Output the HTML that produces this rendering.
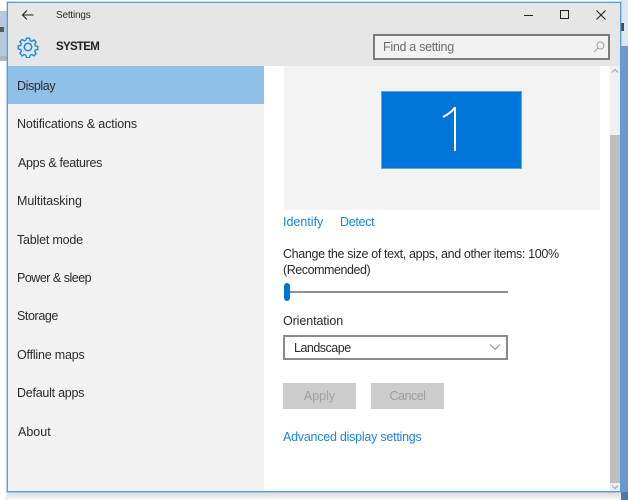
<!DOCTYPE html>
<html>
<head>
<meta charset="utf-8">
<style>
html,body{margin:0;padding:0;background:#fff}
body{width:628px;height:500px;position:relative;overflow:hidden;font-family:"Liberation Sans",sans-serif;color:#222}
.a{position:absolute}
.t{position:absolute;font-size:12.5px;line-height:16px;white-space:nowrap;color:#2a2a2a;filter:blur(.25px)}
.l{color:#1a85dd}
</style>
</head>
<body>
<!-- backdrop -->
<div class="a" style="left:0;top:11px;width:7px;height:50px;background:#b9c9dc"></div>
<div class="a" style="left:0;top:56px;width:7px;height:5px;background:#a9b8c8"></div>
<div class="a" style="left:0;top:27px;width:4px;height:5px;background:#555a60"></div>
<div class="a" style="left:0;top:61px;width:8px;height:439px;background:linear-gradient(90deg,#fff 0,#fff 4px,#e8e8e8 8px)"></div>
<div class="a" style="left:621px;top:0;width:7px;height:500px;background:#6f98c8"></div>
<div class="a" style="left:621px;top:0;width:7px;height:46px;background:#dfe6ee"></div>
<div class="a" style="left:621px;top:23px;width:3px;height:8px;background:#3d4a5a"></div>
<div class="a" style="left:8px;top:492px;width:613px;height:8px;background:linear-gradient(#d8d8d8,#f8f8f8)"></div>
<div class="a" style="left:621px;top:492px;width:7px;height:8px;background:#4f76ab"></div>
<!-- window -->
<div class="a" style="left:7px;top:2px;width:614px;height:490px;box-sizing:border-box;border:1px solid #4f9fe0;background:#fff;box-shadow:0 0 0 1px rgba(91,164,221,.35)"></div>
<!-- title bar -->
<div class="a" style="left:8px;top:3px;width:612px;height:63px;background:#e6e6e6"></div>
<!-- sidebar -->
<div class="a" style="left:8px;top:66px;width:256px;height:425px;background:#f2f2f2"></div>
<div class="a" style="left:8px;top:66px;width:256px;height:38px;background:#90bfe8"></div>
<!-- back arrow -->
<svg class="a" style="left:21px;top:8px" width="14" height="14" viewBox="0 0 14 14" fill="none" stroke="#222" stroke-width="1.1"><path d="M1.5 7H12.5M6 2.5L1.5 7L6 11.5"/></svg>
<div class="t" style="left:56px;top:9px;font-size:10px;line-height:14px;letter-spacing:-.2px">Settings</div>
<!-- gear -->
<svg class="a" style="left:17px;top:36px" width="22" height="22" viewBox="0 0 22 22" fill="none" stroke="#1a85dd" stroke-width="1.5" stroke-linejoin="round"><path d="M9.200 1.200h3.600l.5 2.700 1.900.8 2.300-1.600 2.500 2.500-1.600 2.300.8 1.900 2.700.5v3.400l-2.700.5-.8 1.900 1.600 2.300-2.500 2.500-2.300-1.600-1.900.8-.5 2.700H9.200l-.5-2.700-1.900-.8-2.300 1.600L2 17.900l1.600-2.300-.8-1.900L.1 13.200V9.800l2.700-.5.8-1.900L2 5.100l2.500-2.500 2.300 1.600 1.900-.8z" transform="translate(1.100 1.100) scale(.9)"/><circle cx="11" cy="11" r="3.700"/></svg>
<div class="t" style="left:56px;top:40px;font-size:11.5px;font-weight:bold;color:#222;line-height:15px;letter-spacing:-.7px">SYSTEM</div>
<!-- window buttons -->
<div class="a" style="left:524px;top:15px;width:9px;height:1px;background:#222"></div>
<div class="a" style="left:560px;top:10px;width:9px;height:9px;box-sizing:border-box;border:1.500px solid #222"></div>
<svg class="a" style="left:596px;top:10px" width="10" height="10" viewBox="0 0 10 10" stroke="#222" stroke-width="1.1"><path d="M.5.500L9.500 9.500M9.500.500L.5 9.500"/></svg>
<!-- search -->
<div class="a" style="left:373px;top:34px;width:237px;height:26px;box-sizing:border-box;border:2px solid #7a7a7a;background:#f2f2f2"></div>
<div class="t" style="left:383px;top:39px;color:#6d6d6d;letter-spacing:-.3px">Find a setting</div>
<svg class="a" style="left:593px;top:41px" width="12" height="12" viewBox="0 0 12 12" fill="none" stroke="#a0a0a0" stroke-width="1"><circle cx="7.500" cy="4.500" r="3.500"/><path d="M5 7L1 11"/></svg>
<!-- nav -->
<div class="t" style="left:17px;top:78px;letter-spacing:-.4px">Display</div>
<div class="t" style="left:17px;top:116px;letter-spacing:-.13px">Notifications &amp; actions</div>
<div class="t" style="left:18px;top:155px;letter-spacing:-.33px">Apps &amp; features</div>
<div class="t" style="left:17px;top:193px;letter-spacing:-.1px">Multitasking</div>
<div class="t" style="left:17px;top:232px;letter-spacing:-.2px">Tablet mode</div>
<div class="t" style="left:17px;top:270px;letter-spacing:-.5px">Power &amp; sleep</div>
<div class="t" style="left:17px;top:308px;letter-spacing:-.4px">Storage</div>
<div class="t" style="left:17px;top:347px;letter-spacing:-.2px">Offline maps</div>
<div class="t" style="left:17px;top:385px;letter-spacing:-.25px">Default apps</div>
<div class="t" style="left:18px;top:424px">About</div>
<!-- display preview -->
<div class="a" style="left:284px;top:66px;width:316px;height:144px;background:#f3f3f3"></div>
<div class="a" style="left:381px;top:91px;width:141px;height:78px;box-sizing:border-box;border:1px solid #5ea6e4;background:#0075d9"></div>
<svg class="a" style="left:440px;top:104px" width="24" height="50" viewBox="0 0 24 50" fill="none" stroke="#fff" stroke-width="2"><path d="M15 3V47M15 3.500C12 7.500 8 10.500 3 13"/></svg>
<div class="t l" style="left:283px;top:214px">Identify</div>
<div class="t l" style="left:340px;top:214px;letter-spacing:-.3px">Detect</div>
<div class="t" style="left:283px;top:246px;letter-spacing:-.35px">Change the size of text, apps, and other items: 100%</div>
<div class="t" style="left:283px;top:262px;letter-spacing:-.45px">(Recommended)</div>
<!-- slider -->
<div class="a" style="left:284px;top:291px;width:224px;height:2px;background:#8f8f8f"></div>
<div class="a" style="left:284px;top:283px;width:6px;height:18px;border-radius:3px;background:#0075d9"></div>
<div class="t" style="left:283px;top:313px;letter-spacing:-.1px">Orientation</div>
<!-- dropdown -->
<div class="a" style="left:283px;top:335px;width:225px;height:25px;box-sizing:border-box;border:2px solid #8a8a8a;background:#fff"></div>
<div class="t" style="left:294px;top:340px;letter-spacing:-.5px">Landscape</div>
<svg class="a" style="left:489px;top:343px" width="12" height="8" viewBox="0 0 12 8" fill="none" stroke="#8a8a8a" stroke-width="1"><path d="M1 1.500L6 6.500L11 1.500"/></svg>
<!-- buttons -->
<div class="a" style="left:283px;top:383px;width:73px;height:26px;background:#cccccc"></div>
<div class="t" style="left:283px;top:388px;width:73px;text-align:center;color:#9f9f9f">Apply</div>
<div class="a" style="left:371px;top:383px;width:73px;height:26px;background:#cccccc"></div>
<div class="t" style="left:371px;top:388px;width:73px;text-align:center;color:#9f9f9f;letter-spacing:-.5px">Cancel</div>
<div class="t l" style="left:283px;top:429px;letter-spacing:-.24px">Advanced display settings</div>
<!-- scrollbar -->
<div class="a" style="left:610px;top:66px;width:10px;height:425px;background:#f0f0f0"></div>
<div class="a" style="left:610px;top:135px;width:10px;height:348px;background:#c0bfbd"></div>
<svg class="a" style="left:611px;top:68px" width="8" height="6" viewBox="0 0 8 6" fill="none" stroke="#a8a8a8" stroke-width="1.200"><path d="M1 4.500L4 1.500L7 4.500"/></svg>
<svg class="a" style="left:611px;top:484px" width="8" height="6" viewBox="0 0 8 6" fill="none" stroke="#a8a8a8" stroke-width="1.200"><path d="M1 1.500L4 4.500L7 1.500"/></svg>
</body>
</html>
